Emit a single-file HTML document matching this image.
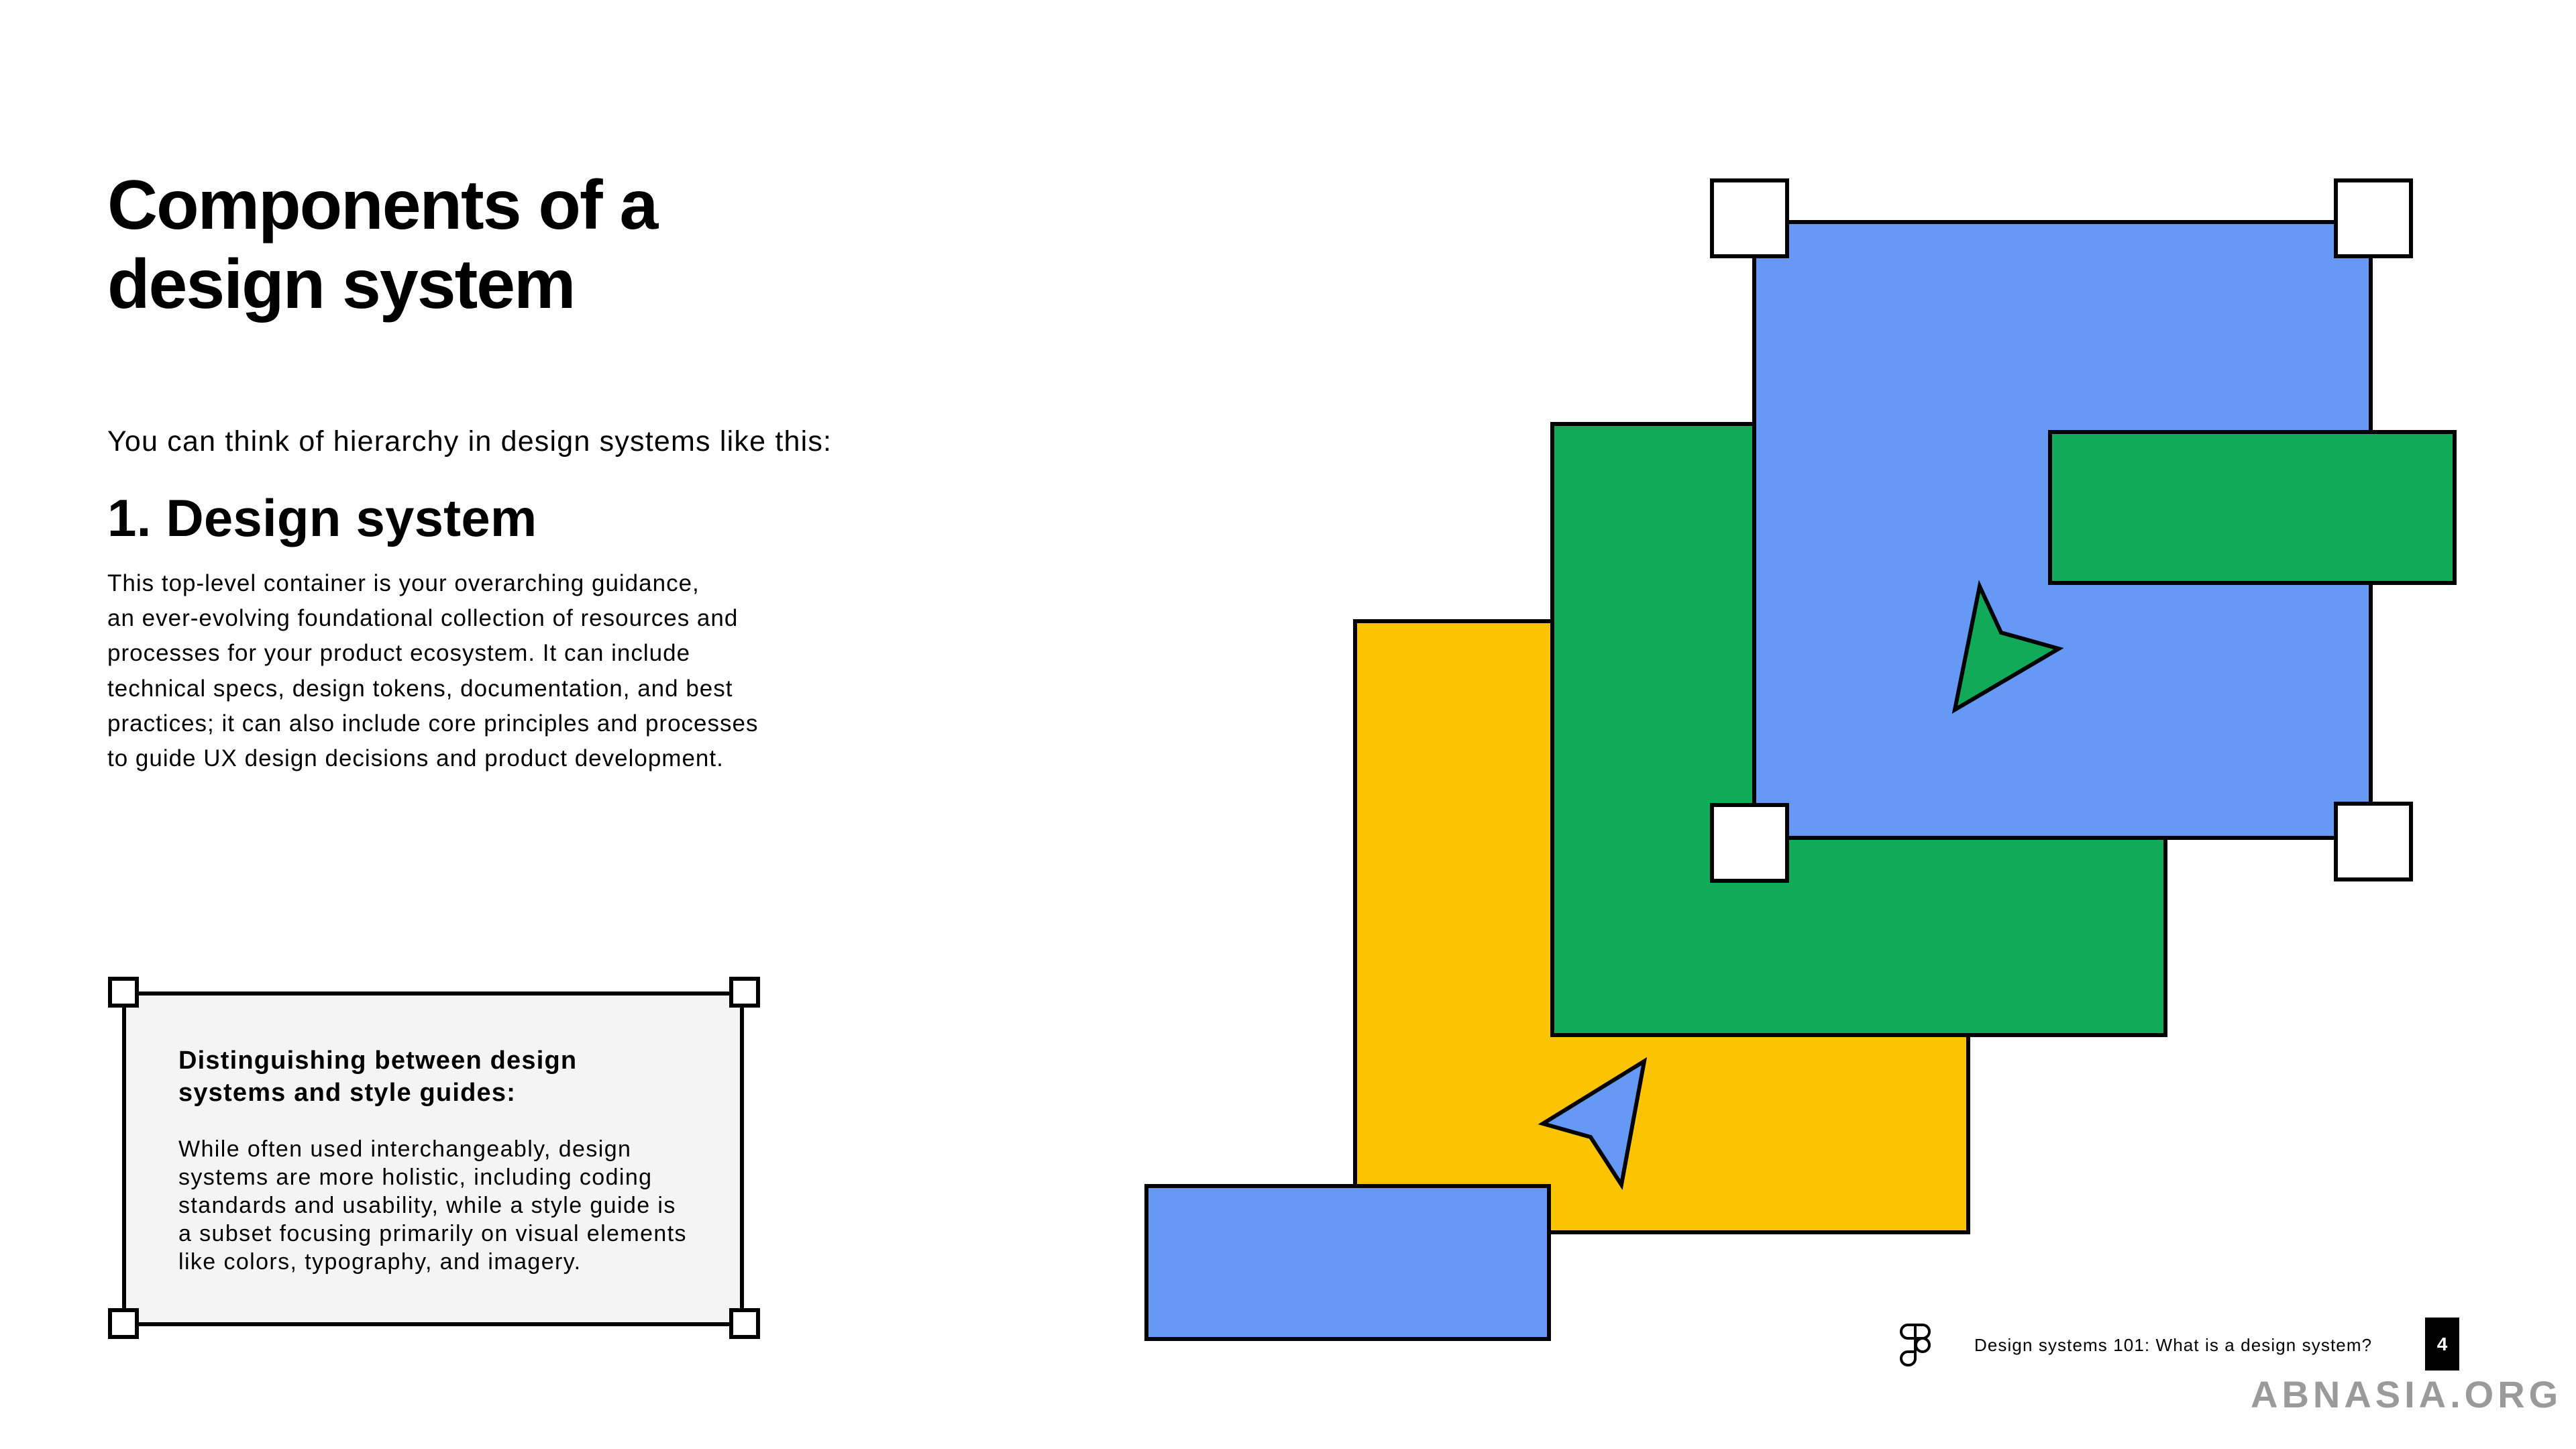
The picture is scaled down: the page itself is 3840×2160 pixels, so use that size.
<!DOCTYPE html>
<html><head><meta charset="utf-8"><style>
body{margin:0;width:3840px;height:2160px;background:#fff;position:relative;overflow:hidden;font-family:"Liberation Sans",sans-serif;color:#000}
.t{position:absolute;white-space:nowrap;transform-origin:0 0}
</style></head><body>
<div class="t" style="left:160px;top:247px;font-size:104px;font-weight:bold;line-height:118px;letter-spacing:-2px">Components of a<br>design system</div>
<div class="t" style="left:160px;top:634px;font-size:43px;letter-spacing:1.2px">You can think of hierarchy in design systems like this:</div>
<div class="t" style="left:160px;top:727px;font-size:78px;font-weight:bold;letter-spacing:0.2px">1. Design system</div>
<div class="t" style="left:160px;top:844px;font-size:35px;line-height:52.2px;letter-spacing:1px">This top-level container is your overarching guidance,<br>an ever-evolving foundational collection of resources and<br>processes for your product ecosystem. It can include<br>technical specs, design tokens, documentation, and best<br>practices; it can also include core principles and processes<br>to guide UX design decisions and product development.</div>

<div style="position:absolute;left:182px;top:1478px;width:915px;height:487px;border:6px solid #000;background:#f4f4f4"></div>
<div style="position:absolute;left:161px;top:1456px;width:34px;height:34px;border:6px solid #000;background:#fff"></div>
<div style="position:absolute;left:1087px;top:1456px;width:34px;height:34px;border:6px solid #000;background:#fff"></div>
<div style="position:absolute;left:161px;top:1950px;width:34px;height:34px;border:6px solid #000;background:#fff"></div>
<div style="position:absolute;left:1087px;top:1950px;width:34px;height:34px;border:6px solid #000;background:#fff"></div>
<div class="t" style="left:266px;top:1557px;font-size:38px;font-weight:bold;line-height:48px;letter-spacing:1.2px">Distinguishing between design<br>systems and style guides:</div>
<div class="t" style="left:266px;top:1692px;font-size:34px;line-height:42px;letter-spacing:1.4px">While often used interchangeably, design<br>systems are more holistic, including coding<br>standards and usability, while a style guide is<br>a subset focusing primarily on visual elements<br>like colors, typography, and imagery.</div>

<svg style="position:absolute;left:0;top:0" width="3840" height="2160">
<g stroke="#000" stroke-width="6">
<rect x="2020" y="926" width="914" height="911" fill="#fcc400"/>
<rect x="2314" y="632" width="914" height="911" fill="#10aa58"/>
<rect x="2615" y="331" width="919" height="918" fill="#6699f5"/>
<rect x="3056" y="644" width="603" height="225" fill="#10aa58"/>
<rect x="1709" y="1768" width="600" height="228" fill="#6699f5"/>
<polygon points="2951,874 2983,943 3069,967 2914,1058" fill="#10aa58"/>
<polygon points="2451,1582 2417,1766 2371,1695 2300,1675" fill="#6699f5"/>
<rect x="2552" y="269" width="112" height="113" fill="#fff"/>
<rect x="3482" y="269" width="112" height="113" fill="#fff"/>
<rect x="2552" y="1200" width="112" height="113" fill="#fff"/>
<rect x="3482" y="1198" width="112" height="113" fill="#fff"/>
</g>
<g fill="none" stroke="#000" stroke-width="4">
<path d="M2844 1975h22a10 10 0 0 1 0 20h-22a10 10 0 0 1 0-20z M2844 1995h22 M2855 1975v40 M2855 2015h-11a10 10 0 0 0 0 20a10 10 0 0 0 11-10z M2866 1995a10 10 0 1 1 0 20a10 10 0 1 1 0-20z"/>
</g>
</svg>
<div class="t" style="left:2943px;top:1990px;font-size:26px;letter-spacing:1.1px">Design systems 101: What is a design system?</div>
<div style="position:absolute;left:3615px;top:1964px;width:51px;height:79px;background:#000;color:#fff;font-weight:bold;font-size:28px;line-height:79px;text-align:center">4</div>
<div class="t" style="left:3355px;top:2046px;font-size:56px;font-weight:bold;color:#9a9a9a;letter-spacing:6px">ABNASIA.ORG</div>
</body></html>
